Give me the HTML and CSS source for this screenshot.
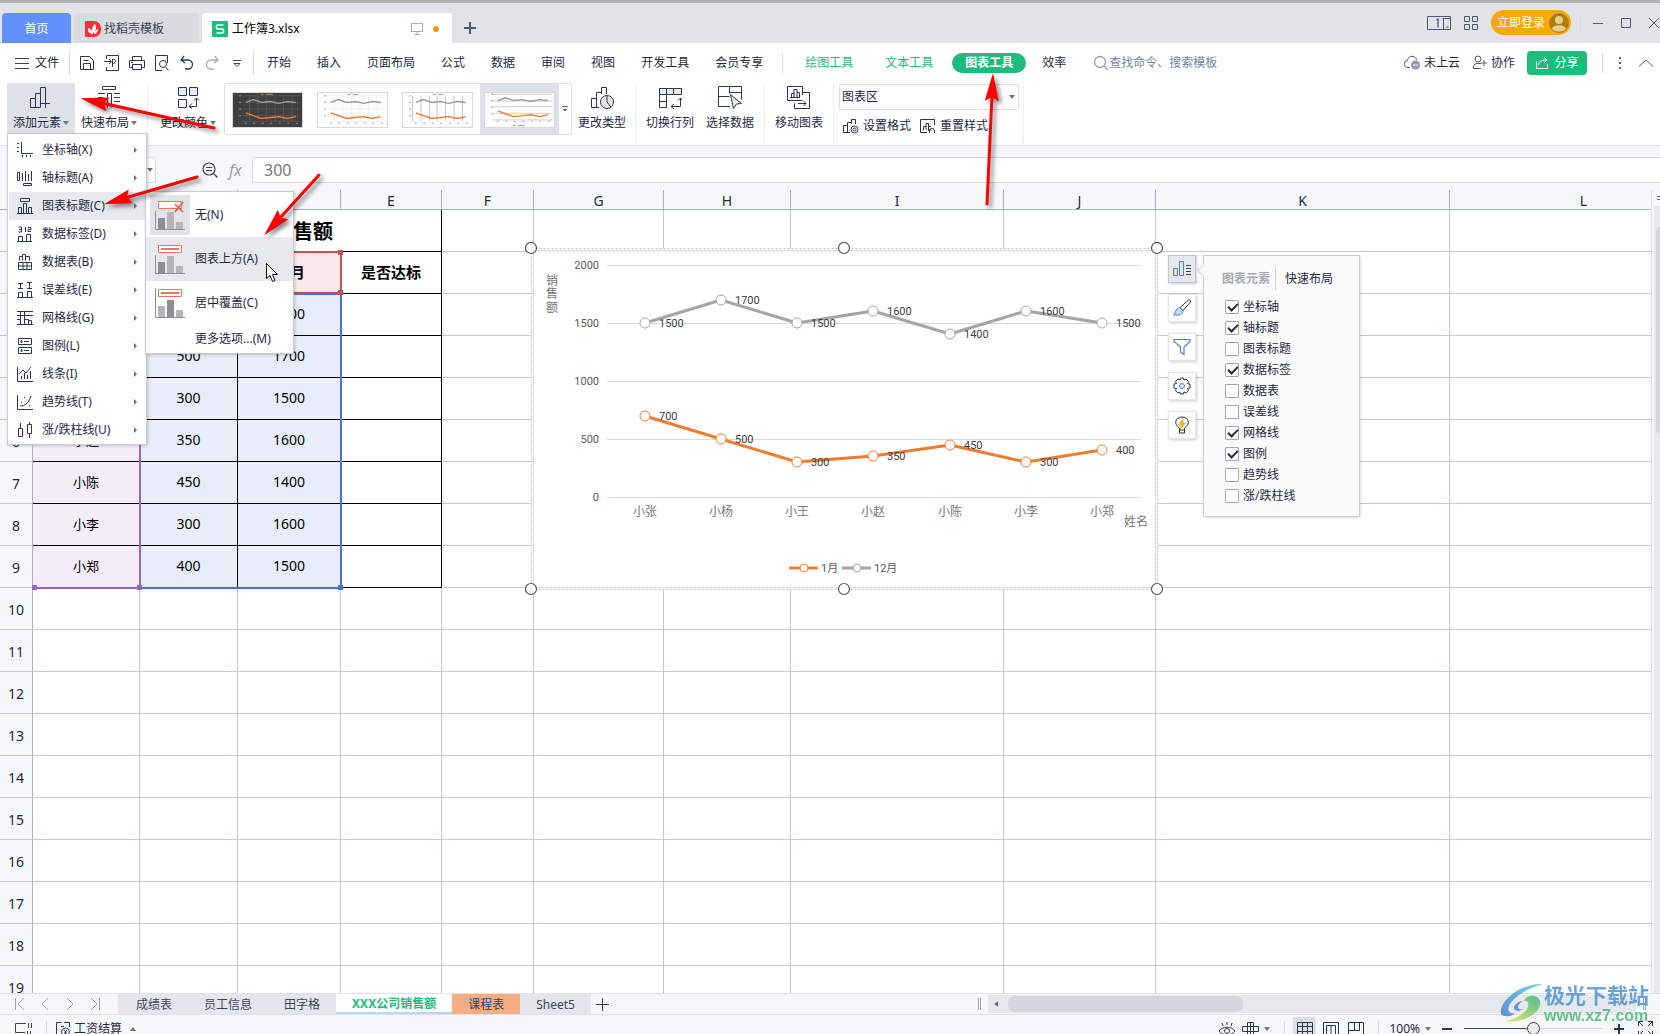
FILE: index.html
```html
<!DOCTYPE html>
<html lang="zh-CN">
<head>
<meta charset="utf-8">
<title>工作簿3.xlsx</title>
<link rel="stylesheet" href="styles.css">
</head>
<body>
<svg class="defs" aria-hidden="true">
  <defs>
    <symbol id="caret" viewBox="0 0 6 4"><path d="M0 0h6L3 4z" fill="#6b7488"/></symbol>
    <symbol id="thumb-lines" viewBox="0 0 70 36">
      <g fill="none" stroke-width="1.5">
        <path d="M12 10 20 7 29 10 38 9 47 11 56 9 65 10" stroke="#9a9a9a"/>
        <path d="M12 21 20 24 29 27 38 26 47 25 56 27 65 25" stroke="#ed7d31"/>
      </g>
      <path d="M11 32h2M20 32h2M29 32h2M38 32h2M47 32h2M56 32h2M65 32h2M5 3h2M5 10h2M5 17h2M5 24h2" stroke="#999"/>
    </symbol>
    <symbol id="thumb-grid" viewBox="0 0 70 36"><path d="M8 3h60M8 10h60M8 17h60M8 24h60M8 30h60M16 3v27M25 3v27M34 3v27M43 3v27M52 3v27M61 3v27"/></symbol>
  </defs>
</svg>
<div class="app">
  <header class="titlebar">
    <nav class="doc-tabs">
      <button class="doc-tab home">首页</button>
      <button class="doc-tab template">
        <svg width="16" height="16" viewBox="0 0 16 16"><path d="M1 0h8a7 7 0 0 1 7 7v2a7 7 0 0 1-7 7H1a1 1 0 0 1-1-1V1a1 1 0 0 1 1-1z" fill="#fb2d3a"/><path d="M8 13C4 13 2.500 10 3 7c3 1 5 3 5 6zM8 12c-2-4 0-8 2-9 2 3 1 7-2 9zM9 13c0-3 2-4 4-5 0 3-2 5-4 5z" fill="#fff"/></svg>
        找稻壳模板</button>
      <button class="doc-tab current">
        <svg width="16" height="16" viewBox="0 0 16 16"><rect width="16" height="16" rx="1" fill="#1fbb7d"/><path d="M11.500 4H6a1.500 1.500 0 0 0-1.500 1.500v1A1.500 1.500 0 0 0 6 8h4a1.500 1.500 0 0 1 1.500 1.500v1A1.500 1.500 0 0 1 10 12H4.500" fill="none" stroke="#fff" stroke-width="1.600"/></svg>
        <span class="grow">工作簿3.xlsx</span>
        <svg width="12" height="12" viewBox="0 0 12 12" fill="none" stroke="#a3adc6"><path d="M.5.500h11v8H.5zM6 8.500v3M3 11.500h6"/></svg>
        <i class="dirty"></i>
      </button>
      <button class="plain add-tab" aria-label="新建"><svg width="12" height="12" viewBox="0 0 12 12" stroke="#4c5878" stroke-width="2"><path d="M6 0v12M0 6h12"/></svg></button>
    </nav>
    <div class="window-tools">
      <svg width="24" height="14" viewBox="0 0 24 14" fill="none" stroke="#4c5878"><path d="M.5.500h23v13H.5zM15.500 2.500h8M16.500 2.500v11M19 11h2.500"/><path d="M9.500 4l1.500-1v8.500" stroke-width="1.300"/></svg>
      <svg width="14" height="14" viewBox="0 0 14 14" fill="none" stroke="#4c5878"><path d="M.5.500h5v5h-5zM8.500.500h5v5h-5zM.5 8.500h5v5h-5zM8.500 8.500h5v5h-5z"/></svg>
      <button class="login">立即登录<svg width="20" height="20" viewBox="0 0 20 20"><circle cx="10" cy="10" r="10" fill="#b07c05"/><circle cx="10" cy="7" r="4" fill="#e6cd96"/><path d="M3 16c1-5 13-5 14 0a10 10 0 0 1-14 0z" fill="#e6cd96"/></svg></button>
      <span class="rule"></span>
      <button class="plain" aria-label="最小化"><svg width="10" height="10" stroke="#4c5878"><path d="M0 5.500h10"/></svg></button>
      <button class="plain" aria-label="最大化"><svg width="10" height="10" fill="none" stroke="#4c5878"><path d="M.5.500h9v9h-9z"/></svg></button>
      <button class="plain" aria-label="关闭"><svg width="11" height="10" stroke="#4c5878"><path d="M0 0l10 10M10 0 0 10"/></svg></button>
    </div>
  </header>

  <div class="menubar">
    <button class="plain file"><svg width="14" height="12" stroke="#3a4256"><path d="M0 1.500h14M0 6.500h14M0 11.500h14"/></svg>文件</button>
    <span class="rule tall"></span>
    <div class="quick">
      <button class="plain" aria-label="保存"><svg width="16" height="16" fill="none" stroke="#2d3650"><path d="M1.500 1.500h9l4 4v9h-13zM4.500 14.500v-6h7v6M4.500 5.500h5"/></svg></button>
      <button class="plain" aria-label="输出为PDF"><svg width="16" height="16" fill="none" stroke="#2d3650"><path d="M2.500 4V.500h12v15h-12V12M0 6.500h7M5 4l2.500 2.500L5 9M8.500 4v8M8.500 4.500c4-1 4 4 0 4"/></svg></button>
      <button class="plain" aria-label="打印"><svg width="16" height="16" fill="none" stroke="#2d3650"><path d="M3.500 5V1.500h9V5M3.500 12.500h-3v-7h15v7h-3M3.500 9.500h9v5h-9zM2 7.500h2"/></svg></button>
      <button class="plain" aria-label="打印预览"><svg width="16" height="16" fill="none" stroke="#2d3650"><path d="M13.500 8V.500h-12v15H8"/><circle cx="9" cy="9" r="3.500"/><path d="M11.500 12l3 3.500"/></svg></button>
      <button class="plain" aria-label="撤销"><svg width="16" height="16" fill="none" stroke="#2d3650" stroke-width="1.300"><path d="M5 1 2 5l4 3M2 5h7a4.500 4.500 0 0 1 0 9H6"/></svg></button>
      <button class="plain" aria-label="恢复"><svg width="16" height="16" fill="none" stroke="#a9aeb9" stroke-width="1.300"><path d="M11 1l3 4-4 3M14 5H7a4.500 4.500 0 0 0 0 9h3"/></svg></button>
      <button class="plain" aria-label="更多"><svg width="16" height="16" fill="none" stroke="#3a4256"><path d="M4 5.500h8M5 8.500l3 3 3-3z"/></svg></button>
    </div>
    <span class="rule tall"></span>
    <nav class="tabs">
      <button class="plain">开始</button><button class="plain">插入</button><button class="plain">页面布局</button><button class="plain">公式</button><button class="plain">数据</button><button class="plain">审阅</button><button class="plain">视图</button><button class="plain">开发工具</button><button class="plain">会员专享</button>
    </nav>
    <span class="rule"></span>
    <nav class="context-tabs">
      <button class="plain">绘图工具</button><button class="plain">文本工具</button>
    </nav>
    <button class="pill">图表工具</button>
    <button class="plain">效率</button>
    <label class="search"><svg width="16" height="16" fill="none" stroke="#8f9bb5" stroke-width="1.300"><circle cx="7" cy="7" r="5.500"/><path d="M11 11l4 4"/></svg><input type="text" placeholder="查找命令、搜索模板" aria-label="查找命令"></label>
    <div class="menubar-right">
      <button class="plain cloud"><svg width="17" height="15" fill="none" stroke="#4c5878"><path d="M6 12.500H4a3.500 3.500 0 0 1-.5-7C4 0 12 0 12.500 5"/><circle cx="11.500" cy="10" r="4.500" fill="#8f99ae" stroke="none"/><path d="M9 10h5" stroke="#fff"/></svg>未上云</button>
      <button class="plain coop"><svg width="15" height="15" fill="none" stroke="#4c5878"><circle cx="6" cy="4" r="3"/><path d="M9 13.500H1.500v-2A3.500 3.500 0 0 1 5 8.500h4M12 5v6M9 8h6"/></svg>协作</button>
      <button class="share"><svg width="14" height="14" fill="none" stroke="#fff"><path d="M1.500 5.500v7h11V8M3.500 9c0-3 3-5 8-5M9 1.500 12 4 9 6.500"/></svg>分享</button>
      <span class="rule"></span>
      <button class="plain" aria-label="更多"><svg width="4" height="14" fill="#5b647a"><path d="M1 1h2v2H1zM1 6h2v2H1zM1 11h2v2H1z"/></svg></button>
      <button class="plain" aria-label="折叠"><svg width="14" height="8" fill="none" stroke="#4c5878"><path d="M0 7.500l7-6.500 7 6.500"/></svg></button>
    </div>
  </div>

  <div class="ribbon">
    <button class="tool active"><svg width="24" height="24" fill="none" stroke="#2d3650"><path d="M1.500 22.500v-9h5v9zM6.500 13V8.500h5v14H1M11.500 8.500v-6h5V15M16.500 14v9M12 18.500h9"/></svg><span>添加元素<svg class="caret"><use href="#caret"/></svg></span></button>
    <button class="tool"><svg width="24" height="24" fill="none" stroke="#2d3650"><path d="M5.500 1.500h13v3h-13zM1 8.500h7M1 12.500h5M1 16.500h5M6.500 22.500v-9h4v9M10.500 13V8.500h4v14M17 8.500h6M17 12.500h6M17 16.500h6"/></svg><span>快速布局<svg class="caret"><use href="#caret"/></svg></span></button>
    <span class="divider"></span>
    <button class="tool colors"><svg width="24" height="24" fill="none" stroke="#2d3650"><path d="M2.500 2.500h8v8h-8zM13.500 2.500h8v8h-8z" fill="#e8eaef"/><path d="M2.500 14.500h8v8h-8zM20.500 13v8.500h-7M16 18.500l-3 3 3 2M18 15.500l2.500-2.500 2.500 2.500"/></svg><span>更改颜色<svg class="caret"><use href="#caret"/></svg></span></button>
    <div class="gallery">
      <button class="style dark" aria-label="样式1"><svg viewBox="0 0 70 36"><use href="#thumb-grid" stroke="#555"/><use href="#thumb-lines"/><path d="M28 1.500h3" stroke="#ed7d31"/><path d="M33 1.500h8" stroke="#999"/></svg></button>
      <button class="style" aria-label="样式2"><svg viewBox="0 0 70 36"><use href="#thumb-grid" stroke="#eee"/><use href="#thumb-lines"/><path d="M30 1.500h3" stroke="#ed7d31"/><path d="M35 1.500h6" stroke="#999"/></svg></button>
      <button class="style" aria-label="样式3"><svg viewBox="0 0 70 36"><path d="M8.500 3v27M17.500 3v27M26.500 3v27M34.500 3v27M43.500 3v27M52.500 3v27M61.500 3v27" stroke="#c4c4c4"/><use href="#thumb-lines"/><path d="M30 1.500h3" stroke="#ed7d31"/><path d="M35 1.500h6" stroke="#999"/></svg></button>
      <button class="style picked" aria-label="样式4"><svg viewBox="0 0 70 36"><path d="M6 1.500h64M6 8.500h64M6 14.500h64M6 21.500h64M6 28.500h64" stroke="#ccc"/><use href="#thumb-lines" y="-2"/><path d="M28 34.500h3" stroke="#ed7d31"/><path d="M33 34.500h8" stroke="#999"/></svg></button>
      <button class="more" aria-label="更多样式"><svg width="6" height="6" stroke="#5b6c8f"><path d="M0 .500h6M1 3.500h4M2 4.500h2"/></svg></button>
    </div>
    <button class="tool"><svg width="24" height="24" fill="none" stroke="#2d3650"><path d="M9 22.500H1.500v-9h5M6.500 22.500V7.500h5M11.500 9V2.500h5V9"/><circle cx="17" cy="17" r="6.500" fill="#e8eaef"/><path d="M17 10.500V17l4 5"/></svg><span>更改类型</span></button>
    <span class="divider"></span>
    <button class="tool"><svg width="24" height="24" fill="none" stroke="#2d3650"><path d="M1.500 3.500h22v6h-22z" fill="#e8eaef"/><path d="M8.500 3.500v19h-7v-19M15.500 3.500v6M1.500 16.500h7M22.500 13v8.500h-9M16 19l-3 2.500 3 2.500M20 15.500l2.500-2.500 2 2.500"/></svg><span>切换行列</span></button>
    <button class="tool"><svg width="24" height="24" fill="none" stroke="#2d3650"><path d="M12 21.500H.500v-20h23v13M.500 11.500h11M11.500 1.500v7M11.500 7.500h12"/><path d="M12.500 9.500l11 9-5 .500-3 4.500z" fill="#e8eaef"/></svg><span>选择数据</span></button>
    <span class="divider"></span>
    <button class="tool"><svg width="24" height="24" fill="none" stroke="#2d3650"><path d="M15.500 10V1.500H.500v14h15M3 12.500h10M4.500 12V8.500h2.500V12M7 9V4.500h3V12M10 7.500h2.500V12M15.500 7.500h7v16h-15v-5M11 18.500h8M16.500 16l2.500 2.500-2.500 2.500"/></svg><span>移动图表</span></button>
    <span class="divider"></span>
    <div class="format">
      <div class="select"><select aria-label="图表元素"><option>图表区</option></select><svg class="caret"><use href="#caret"/></svg></div>
      <div class="format-row">
        <button class="plain"><svg width="16" height="16" fill="none" stroke="#2d3650"><path d="M7 14.500H.500v-7h4M4.500 14.500v-10h4M8.500 6V1.500h4V6"/><circle cx="11.500" cy="11.500" r="3.500"/><circle cx="11.500" cy="11.500" r="1.500"/></svg>设置格式</button>
        <button class="plain"><svg width="16" height="16" fill="none" stroke="#2d3650"><path d="M14.500 7V1.500H.500v13H7M3.500 12V8.500H6V12M6 9V5.500h2.500V12M9 8.500h2M9.500 15v-2a2.500 2.500 0 0 1 5 0v2M8 13l1.500-2 2 2"/></svg>重置样式</button>
      </div>
    </div>
    <span class="divider"></span>
  </div>

  <div class="formula">
    <div class="namebox"><svg class="caret"><use href="#caret"/></svg></div>
    <svg class="lens" width="16" height="16" fill="none" stroke="#3a4256" stroke-width="1.200"><circle cx="7" cy="7" r="6"/><path d="M11.500 11.500l4 4M4 5.500h6M4 8.500h6"/></svg>
    <i class="fx">fx</i>
    <input class="cell-value" type="text" value="300" aria-label="编辑栏">
  </div>

  <main class="sheet">
    <div class="sheet-view">
      <table class="grid">
        <colgroup><col class="c-head"><col class="c-b"><col class="c-c"><col class="c-d"><col class="c-e"><col class="c-f"><col class="c-g"><col class="c-h"><col class="c-i"><col class="c-j"><col class="c-k"><col class="c-l"></colgroup>
        <thead><tr><th></th><th></th><th></th><th></th><th>E</th><th>F</th><th>G</th><th>H</th><th>I</th><th>J</th><th>K</th><th>L</th></tr></thead>
        <tbody>
        <tr><th></th><td colspan="4" class="ink title">XXX公司各月份销售额</td><td><td><td><td><td><td><td></tr>
        <tr><th></th><td class="ink head"></td><td class="ink head rose"></td><td class="ink head rose">12月</td><td class="ink head">是否达标</td><td><td><td><td><td><td><td></tr>
        <tr><th></th><td class="ink name"></td><td class="ink num"></td><td class="ink num">1500</td><td class="ink"></td><td><td><td><td><td><td><td></tr>
        <tr><th></th><td class="ink name"></td><td class="ink num">500</td><td class="ink num">1700</td><td class="ink"></td><td><td><td><td><td><td><td></tr>
        <tr><th></th><td class="ink name"></td><td class="ink num">300</td><td class="ink num">1500</td><td class="ink"></td><td><td><td><td><td><td><td></tr>
        <tr><th>6</th><td class="ink name">小赵</td><td class="ink num">350</td><td class="ink num">1600</td><td class="ink"></td><td><td><td><td><td><td><td></tr>
        <tr><th>7</th><td class="ink name">小陈</td><td class="ink num">450</td><td class="ink num">1400</td><td class="ink"></td><td><td><td><td><td><td><td></tr>
        <tr><th>8</th><td class="ink name">小李</td><td class="ink num">300</td><td class="ink num">1600</td><td class="ink"></td><td><td><td><td><td><td><td></tr>
        <tr><th>9</th><td class="ink name">小郑</td><td class="ink num">400</td><td class="ink num">1500</td><td class="ink"></td><td><td><td><td><td><td><td></tr>
        <tr><th>10</th><td><td><td><td><td><td><td><td><td><td><td></tr>
        <tr><th>11</th><td><td><td><td><td><td><td><td><td><td><td></tr>
        <tr><th>12</th><td><td><td><td><td><td><td><td><td><td><td></tr>
        <tr><th>13</th><td><td><td><td><td><td><td><td><td><td><td></tr>
        <tr><th>14</th><td><td><td><td><td><td><td><td><td><td><td></tr>
        <tr><th>15</th><td><td><td><td><td><td><td><td><td><td><td></tr>
        <tr><th>16</th><td><td><td><td><td><td><td><td><td><td><td></tr>
        <tr><th>17</th><td><td><td><td><td><td><td><td><td><td><td></tr>
        <tr><th>18</th><td><td><td><td><td><td><td><td><td><td><td></tr>
        <tr><th>19</th><td><td><td><td><td><td><td><td><td><td><td></tr>
        </tbody>
      </table>
      <div class="range values"><i class="br"></i></div>
      <div class="range names"><i class="br"></i><i class="bl"></i></div>
      <div class="range series"><i class="tr"></i><i class="br"></i></div>

      <svg class="chart" width="640" height="354" viewBox="525 242 640 354">
        <rect x="531.500" y="248.500" width="626" height="341" fill="#fff" stroke="#bbb" stroke-dasharray="2 2"/>
        <rect x="533.500" y="250.500" width="622" height="337" fill="#fff" stroke="#d9d9d9"/>
        <path d="M607 265.500h534M607 323.500h534M607 381.500h534M607 439.500h534M607 497.500h534" stroke="#d9d9d9"/>
        <g class="axis" text-anchor="end"><text x="599" y="269">2000</text><text x="599" y="327">1500</text><text x="599" y="385">1000</text><text x="599" y="443">500</text><text x="599" y="501">0</text></g>
        <g class="cats" text-anchor="middle"><text x="645" y="516">小张</text><text x="721" y="516">小杨</text><text x="797" y="516">小王</text><text x="873" y="516">小赵</text><text x="950" y="516">小陈</text><text x="1026" y="516">小李</text><text x="1102" y="516">小郑</text><text x="1136" y="526">姓名</text><text x="552" y="285">销</text><text x="552" y="298">售</text><text x="552" y="312">额</text></g>
        <g fill="none" stroke-width="3" stroke-linejoin="round">
          <path d="M645 323 721 300 797 323 873 311 950 334 1026 311 1102 323" stroke="#a5a5a5"/>
          <path d="M645 416 721 439 797 462 873 456 950 445 1026 462 1102 450" stroke="#ed7d31"/>
          <path d="M789 568h29" stroke="#ed7d31"/><path d="M842 568h29" stroke="#a5a5a5"/>
        </g>
        <g fill="#fff" stroke="#a5a5a5"><circle cx="645" cy="323" r="5"/><circle cx="721" cy="300" r="5"/><circle cx="797" cy="323" r="5"/><circle cx="873" cy="311" r="5"/><circle cx="950" cy="334" r="5"/><circle cx="1026" cy="311" r="5"/><circle cx="1102" cy="323" r="5"/><circle cx="857" cy="568" r="4"/></g>
        <g fill="#fff" stroke="#ed7d31"><circle cx="645" cy="416" r="5"/><circle cx="721" cy="439" r="5"/><circle cx="797" cy="462" r="5"/><circle cx="873" cy="456" r="5"/><circle cx="950" cy="445" r="5"/><circle cx="1026" cy="462" r="5"/><circle cx="1102" cy="450" r="5"/><circle cx="804" cy="568" r="4"/></g>
        <g class="labels"><text x="659" y="327">1500</text><text x="735" y="304">1700</text><text x="811" y="327">1500</text><text x="887" y="315">1600</text><text x="964" y="338">1400</text><text x="1040" y="315">1600</text><text x="1116" y="327">1500</text><text x="659" y="420">700</text><text x="735" y="443">500</text><text x="811" y="466">300</text><text x="887" y="460">350</text><text x="964" y="449">450</text><text x="1040" y="466">300</text><text x="1116" y="454">400</text></g>
        <g class="axis"><text x="821" y="572">1月</text><text x="874" y="572">12月</text></g>
        <g fill="#fff" stroke="#555" stroke-width="1.200"><circle cx="531" cy="248" r="5.500"/><circle cx="844" cy="248" r="5.500"/><circle cx="1157" cy="248" r="5.500"/><circle cx="531" cy="589" r="5.500"/><circle cx="844" cy="589" r="5.500"/><circle cx="1157" cy="589" r="5.500"/></g>
      </svg>

      <div class="chart-tools">
        <button class="on" aria-label="图表元素"><svg width="20" height="20" fill="none"><path d="M1.500 9.500h4v7h-4z" stroke="#777" fill="#ddd"/><path d="M7.500 2.500h4v14h-4z" stroke="#4a7fdc" fill="#dbe7fb"/><path d="M14 6.500h5M14 9.500h5M14 12.500h5M14 15.500h5" stroke="#444"/></svg></button>
        <button aria-label="图表样式"><svg width="20" height="20" fill="none"><path d="M8 9.500 16.500 2c1.500-.500 2.500.500 2 2L11 12.500z" stroke="#333"/><path d="M7.500 9.500l3.500 3c0 4-4 5-9.500 4.500C4 15 3 11 7.500 9.500z" stroke="#4a7fdc" fill="#c9dbf8"/></svg></button>
        <button aria-label="图表筛选器"><svg width="20" height="20" fill="none" stroke="#4a7fdc" stroke-width="1.200"><path d="M2 2.500h16v2L12 10v7.500L8.500 15v-5L2 4.500z"/></svg></button>
        <button aria-label="设置"><svg width="20" height="20" fill="none"><path d="M8.500 2h3l.5 2 2-1 2.500 2.500-1 2 2.500.500v4l-2.500.500 1 2-2.500 2.500-2-1-.5 2h-3l-.5-2-2 1-2.500-2.500 1-2-2.500-.500V8l2.500-.500-1-2L6 3l2 1z" stroke="#333"/><circle cx="10" cy="10" r="2.500" stroke="#4a7fdc" fill="#dbe7fb"/></svg></button>
        <button aria-label="智能推荐"><svg width="20" height="20" fill="none"><path d="M7.500 15v-2C1 9 3.500 2 10 2s9 7 2.500 11v2zM7.500 15v3h5v-3" stroke="#333"/><path d="M11 4 6.500 9.500H9L8.500 14l5-6H11z" fill="#fdb813" stroke="#d98a00" stroke-width=".5"/></svg></button>
      </div>

      <section class="elements">
        <div class="elements-tabs"><button class="plain chosen">图表元素</button><button class="plain">快速布局</button></div>
        <label><input type="checkbox" checked>坐标轴</label>
        <label><input type="checkbox" checked>轴标题</label>
        <label><input type="checkbox">图表标题</label>
        <label><input type="checkbox" checked>数据标签</label>
        <label><input type="checkbox">数据表</label>
        <label><input type="checkbox">误差线</label>
        <label><input type="checkbox" checked>网格线</label>
        <label><input type="checkbox" checked>图例</label>
        <label><input type="checkbox">趋势线</label>
        <label><input type="checkbox">涨/跌柱线</label>
      </section>
    </div>
    <div class="vscroll"><svg width="8" height="4" stroke="#5b6c8f"><path d="M3 .500h5M3 3.500h5"/></svg><span class="vtrack"><span class="vthumb"></span></span></div>
  </main>

  <div class="sheetbar">
    <div class="nav">
      <button class="plain" aria-label="第一个"><svg width="10" height="14" fill="none" stroke="#a0a5b0"><path d="M.5 1v12M9 1 3 7l6 6"/></svg></button>
      <button class="plain" aria-label="上一个"><svg width="10" height="14" fill="none" stroke="#a0a5b0"><path d="M8 1 2 7l6 6"/></svg></button>
      <button class="plain" aria-label="下一个"><svg width="10" height="14" fill="none" stroke="#a0a5b0"><path d="M2 1l6 6-6 6"/></svg></button>
      <button class="plain" aria-label="最后一个"><svg width="10" height="14" fill="none" stroke="#a0a5b0"><path d="M9.500 1v12M1 1l6 6-6 6"/></svg></button>
    </div>
    <button class="sheet-tab">成绩表</button><button class="sheet-tab">员工信息</button><button class="sheet-tab">田字格</button><button class="sheet-tab here">XXX公司销售额</button><button class="sheet-tab orange">课程表</button><button class="sheet-tab">Sheet5</button>
    <button class="plain add-sheet" aria-label="新建工作表"><svg width="13" height="13" stroke="#3a4256"><path d="M6.500 0v13M0 6.500h13"/></svg></button>
    <div class="hscroll">
      <span class="grip"></span>
      <span class="htrack"><svg width="4" height="6"><path d="M4 0v6L0 3z" fill="#6b7488"/></svg><span class="hthumb"></span></span>
      <span class="grip"></span>
    </div>
  </div>

  <footer class="status">
    <svg width="17" height="14" fill="none" stroke="#3a4256"><path d="M10 10.500H.500v-9H11M5 13.500h5M13.500 1v5M16.500 1v5M12.500 9v5M15.500 9v5"/></svg>
    <span class="rule small"></span>
    <button class="plain payroll"><svg width="15" height="16" fill="none" stroke="#2d3650"><path d="M4 15.500H.500v-14h5M8 1.500h5.500V6M5 5.500h3"/><circle cx="9.500" cy="11" r="4"/><path d="M8 9l1.500 2L11 9M9.500 11v3M8 12h3"/></svg>工资结算<svg class="caret up"><use href="#caret"/></svg></button>
    <div class="status-right">
      <svg width="18" height="16" fill="none" stroke="#2d3650"><path d="M1 10c3-5 13-5 16 0-3 5-13 5-16 0zM9 1v3M4 2l1 3M14 2l-1 3"/><circle cx="9" cy="10" r="2.500"/></svg>
      <button class="plain focus" aria-label="阅读模式"><svg width="17" height="16" fill="none" stroke="#2d3650"><path d="M.5 5.500h16v5H.5zM8.500 1v14M5.500 1.500h6v13h-6z"/></svg><svg class="caret"><use href="#caret"/></svg></button>
      <span class="rule small"></span>
      <div class="views">
        <button class="plain view-on" aria-label="普通视图"><svg width="16" height="14" fill="none" stroke="#2d3650"><path d="M.5.500h15v13H.5zM.5 4.500h15M.5 9.500h15M5.500.500v13M10.500.500v13"/></svg></button>
        <button class="plain" aria-label="页面布局"><svg width="16" height="14" fill="none" stroke="#2d3650"><path d="M.5 14V.500h15V14M3.500 14V3.500h9V14M8 4v10"/></svg></button>
        <button class="plain" aria-label="分页预览"><svg width="16" height="14" fill="none" stroke="#2d3650"><path d="M.5.500h15v13H.5zM6.500.500v8h5v-8M.5 8.500h11"/></svg></button>
      </div>
      <span class="rule small"></span>
      <button class="plain focus percent">100%<svg class="caret"><use href="#caret"/></svg></button>
      <button class="plain" aria-label="缩小"><svg width="10" height="10" stroke="#2d3650" stroke-width="2"><path d="M0 5h10"/></svg></button>
      <input type="range" class="zoom" aria-label="显示比例" min="0" max="100" value="50">
      <button class="plain" aria-label="放大"><svg width="10" height="10" stroke="#2d3650" stroke-width="2"><path d="M0 5h10M5 0v10"/></svg></button>
      <svg width="15" height="15" fill="none" stroke="#2d3650"><path d="M5 .500H.500V5M.500.500 5 5M10 .500h4.500V5M14.500.500 10 5M5 14.500H.500V10M.500 14.500 5 10M10 14.500h4.500V10M14.500 14.500 10 10"/></svg>
    </div>
  </footer>
</div>

<div class="menu">
  <button><svg width="16" height="16"><path d="M4.500 0v11.500H16M0 1.500h2M0 5.500h2M0 9.500h2M5.500 13v2M9.500 13v2M13.500 13v2"/></svg>坐标轴(X)<i></i></button>
  <button><svg width="16" height="16"><path d="M.5 2.500h2v8h-2zM5.500 3v8M8.500 1v10M11.500 4v7M14.500 1v10M6.500 13.500h8v2h-8z"/></svg>轴标题(A)<i></i></button>
  <button class="hot"><svg width="16" height="16"><path d="M3.500.500h9v3h-9zM0 15.500h16M1.500 15V9.500h3V15M6.500 15V5.500h3V15M11.500 15V9.500h3V15"/></svg>图表标题(C)<i></i></button>
  <button><svg width="16" height="16"><path d="M1.500 1h3v5h-3M2 3.500h2M8.500 1v5M11 1.500h3v2h-3v2h3M1.500 15.500v-5h4v5zM9.500 15.500v-7h4v7zM0 15.500h15"/></svg>数据标签(D)<i></i></button>
  <button><svg width="16" height="16"><path d="M1.500 8.500h13v7h-13zM1.500 12h13M6 8.500v7M10 8.500v7M2.500 6.500v-4h3M5.500 6.500v-6h3v6M8.500 2.500h4v4"/></svg>数据表(B)<i></i></button>
  <button><svg width="16" height="16"><path d="M1.500 15.500v-5h4v5zM10.500 15.500v-6h4v6zM0 15.500h16M1 1.500h5M3.500 1.500v5M1 6.500h5M10 .500h5M12.500.500v6M10 6.500h5"/></svg>误差线(E)<i></i></button>
  <button><svg width="16" height="16"><path d="M0 1.500h4M0 5.500h16M0 9.500h4M0 14.500h16M3.500 1v13M7.500 1v13M3.500 1.500h4M7.500 9.500h4v5M11.500 10.500h3v4M8 1.500h8"/></svg>网格线(G)<i></i></button>
  <button><svg width="16" height="16"><path d="M1.500.500h13v6h-13zM1.500 9.500h13v6h-13zM7 3.500h5M7 12.500h5M4 2.500h1v2H4zM4 11.500h1v2H4z"/></svg>图例(L)<i></i></button>
  <button><svg width="16" height="16"><path d="M.500 1v14.500H16M2 8l4-4 3 3 5-6M4.500 13v-3M7.500 13V7M10.500 13V9M13.500 13V5"/></svg>线条(I)<i></i></button>
  <button><svg width="16" height="16"><path d="M.500 1v14.500H16M3 12c6 0 9-4 11-10M4 8.500h1M7 3.500h1M12 11.500h1"/></svg>趋势线(T)<i></i></button>
  <button><svg width="16" height="16"><path d="M1.500 6.500h4v8h-4zM3.500 1v5M10.500 2.500h4v9h-4zM12.500 0v2M12.500 12v4"/></svg>涨/跌柱线(U)<i></i></button>
</div>

<div class="submenu">
  <button><svg class="boxed" width="40" height="40"><path d="M8 23h7v11H8z" fill="#8e8f94"/><path d="M17 17h7v17h-7zM26 27h7v7h-7z" fill="#b5b6ba"/><path d="M5.500 16v18.500H35" stroke="#8e8f94" fill="none"/><path d="M8.500 6.500h23v7h-23z" fill="#fff" stroke="#e9785c"/><path d="M25 9l8 8M33 7l-8 10" stroke="#ee5535" stroke-width="1.600"/></svg>无(N)</button>
  <button class="hot"><svg width="40" height="40"><path d="M8 23h7v11H8z" fill="#8e8f94"/><path d="M17 17h7v17h-7zM26 27h7v7h-7z" fill="#b5b6ba"/><path d="M5.500 16v18.500H35" stroke="#8e8f94" fill="none"/><path d="M8.500 6.500h23v7h-23z" fill="#fff" stroke="#e9785c"/><path d="M11 10h18" stroke="#e9785c" stroke-width="2"/></svg>图表上方(A)</button>
  <button><svg width="40" height="40"><path d="M17 17h7v17h-7z" fill="#8e8f94"/><path d="M8 23h7v11H8zM26 27h7v7h-7z" fill="#b5b6ba"/><path d="M5.500 5v29.500H35" stroke="#8e8f94" fill="none"/><path d="M8.500 6.500h23v7h-23z" fill="#fff" stroke="#e9785c"/><path d="M11 10h18" stroke="#e9785c" stroke-width="2"/></svg>居中覆盖(C)</button>
  <button class="short">更多选项...(M)</button>
</div>

<svg class="pointers" width="1010" height="290">
  <defs><marker id="head" markerUnits="userSpaceOnUse" markerWidth="32" markerHeight="20" refX="6" refY="8" orient="auto"><path d="M0 1 28 8 0 15 4 8z"/></marker></defs>
  <g class="arrows">
    <path d="M214 128 102 103"/><path d="M197 177 125 198"/><path d="M319 175 279 219"/><path d="M987 204 992 95"/>
  </g>
  <path d="M266.500 263.500v15l3.500-3 2.500 6 2.500-1-2.500-6h5z" fill="#fff" stroke="#111"/>
</svg>

<div class="watermark">
  <svg width="44" height="38" viewBox="0 0 44 38">
    <defs><linearGradient id="wm-b" x1="0" y1="1" x2="1" y2="0"><stop offset="0" stop-color="#4b7fd0"/><stop offset="1" stop-color="#5cc8f5"/></linearGradient><linearGradient id="wm-g" x1="1" y1="0" x2="0" y2="1"><stop offset="0" stop-color="#3bb58a"/><stop offset="1" stop-color="#d9e84a"/></linearGradient></defs>
    <path d="M43 0C25-1 4 12 1 25c-1 4 0 7 4 7 4 1 9-1 10-3-5 1-8-2-6-7C13 13 26 5 43 0z" fill="url(#wm-b)"/>
    <path d="M34 12c8 2 8 10 2 16C29 35 16 39 5 37c11-2 20-7 23-14 1-5-1-7-5-6 3-4 7-6 11-5z" fill="url(#wm-g)"/>
    <path d="M23 17c-5 0-9 4-9 7s5 4 9 1c-3 1-5 0-5-2s2-4 5-6z" fill="#4b86d2"/>
  </svg>
  <p><span class="wm-name">极光下载站</span><span class="wm-url">www.xz7.com</span></p>
</div>
</body>
</html>
```
FILE: styles.css
```css
* { box-sizing: border-box; }
body { margin: 0; height: 100vh; overflow: hidden; position: relative; background: #f6f7f9; color: #1f2942; font: 12px/16px "Noto Sans", "Noto Sans CJK SC", sans-serif; }
button, input, select { font: inherit; color: inherit; }
button { border: 0; margin: 0; padding: 0; background: none; white-space: nowrap; }
svg { display: block; flex: none; }
.defs { position: absolute; width: 0; height: 0; }
.caret { width: 6px; height: 4px; }
.plain { display: flex; align-items: center; }
.rule { width: 1px; height: 20px; background: #d9dbe1; flex: none; }
.rule.tall { height: 24px; }
.rule.small { height: 16px; }
.grow { flex: 1; text-align: left; }

.app { display: flex; flex-direction: column; height: calc(100vh + 8px); }

/* title bar */
.titlebar { display: flex; justify-content: space-between; height: 43px; flex: none; border-top: 3px solid #b2b2b0; background: #e2e3e7; overflow: hidden; }
.doc-tabs { display: flex; align-items: flex-end; padding-left: 2px; gap: 3px; }
.doc-tab { display: flex; align-items: center; height: 30px; padding-top: 2px; border-radius: 4px 4px 0 0; }
.home { width: 69px; justify-content: center; background: #6290fd; color: #fff; }
.template { width: 125px; padding-left: 11px; gap: 3px; background: #dadbdf; color: #3a4256; }
.current { width: 250px; padding-left: 10px; padding-right: 13px; gap: 4px; background: #fff; color: #000; }
.current svg + .dirty { margin-left: 6px; }
.dirty { width: 6px; height: 6px; border-radius: 3px; background: #e79c0b; }
.add-tab { height: 30px; margin-left: 9px; }
.window-tools { display: flex; align-items: center; gap: 18px; margin-bottom: 1px; }
.window-tools > svg + svg { margin-left: -5px; }
.login { display: flex; align-items: center; gap: 4px; height: 25px; margin: 0 -9px 0 -5px; padding: 0 2px 0 6px; border-radius: 13px; background: #f7a80b; color: #fff; }
.window-tools .rule + button { margin-left: -6px; }

/* menu bar */
.menubar { display: flex; align-items: center; height: 39px; flex: none; padding: 0 7px 0 15px; background: #fff; }
.file { gap: 6px; margin-right: 10px; }
.quick { display: flex; gap: 9px; padding: 0 8px 0 9px; }
.tabs { display: flex; gap: 26px; padding: 0 19px 0 13px; }
.context-tabs { display: flex; gap: 32px; padding: 0 19px 0 22px; color: #1fbb7d; }
.pill { width: 74px; height: 20px; margin-right: 16px; border-radius: 10px; background: #1fbb7d; color: #fff; font-weight: bold; }
.search { display: flex; align-items: center; margin-left: 27px; }
.search input { width: 130px; padding: 0; border: 0; outline: 0; background: none; }
.search input::placeholder { color: #76839f; opacity: 1; }
.menubar-right { display: flex; align-items: center; margin-left: auto; }
.cloud { gap: 3px; margin-right: 12px; }
.coop { gap: 4px; margin-right: 12px; }
.share { display: flex; align-items: center; justify-content: center; gap: 5px; width: 60px; height: 24px; margin-right: 15px; border-radius: 4px; background: #1fbb7d; color: #fff; }
.menubar-right .rule + button { margin: 0 17px 0 15px; }

/* ribbon */
.ribbon { display: flex; height: 64px; flex: none; padding: 1px 0 0 7px; border-bottom: 1px solid #dfe2e7; background: #fff; }
.tool { display: flex; flex-direction: column; align-items: center; gap: 6px; width: 68px; height: 51px; padding-top: 2px; flex: none; }
.tool span { display: flex; align-items: center; gap: 2px; }
.tool.active { background: #dee2e8; }
.divider { width: 1px; height: 60px; margin: 0 4px; background: #eceef2; flex: none; }
.colors { margin: 0 2px; }
.gallery { display: flex; height: 52px; border: 1px solid #dcdfe4; border-radius: 2px; flex: none; }
.style { width: 85px; padding: 8px 7px; }
.style:nth-child(4) { width: 79px; padding: 8px 4px; }
.style svg { height: 36px; border: 1px solid #d4d7dc; background: #fff; width: 71px; }
.dark svg { background: #404040; }
.picked { background: #dee2e6; }
.more { display: flex; align-items: center; justify-content: center; width: 12px; }
.gallery ~ .tool { width: 60px; }
.gallery + .tool { margin-right: -1px; }
.format { display: flex; flex-direction: column; gap: 8px; width: 180px; margin: 1px 0 0 1px; flex: none; }
.select { display: flex; align-items: center; height: 26px; border: 1px solid #dcdfe4; border-radius: 2px; padding-right: 3px; }
.select select { flex: 1; appearance: none; border: 0; padding: 0 2px; background: none; outline: 0; }
.format-row { display: flex; gap: 9px; padding-left: 4px; }
.format-row .plain { gap: 4px; }

/* formula bar */
.formula { display: flex; align-items: center; height: 44px; flex: none; padding: 4px 0 0 8px; }
.namebox { display: flex; align-items: center; justify-content: flex-end; width: 148px; height: 26px; padding-right: 2px; border: 1px solid #d5d8de; border-radius: 2px; background: #fff; }
.lens { margin: 0 11px 0 46px; }
.fx { width: 15px; margin: 0 8px 0 0; color: #9a9ea8; font-size: 16px; }
.cell-value { flex: 1; height: 26px; padding: 0 11px; border: 1px solid #d5d8de; border-right: 0; border-radius: 2px 0 0 2px; background: #fff; color: #777; font-size: 16px; outline: 0; }

/* sheet */
.sheet { display: flex; flex: 1; min-height: 0; overflow: hidden; }
.sheet-view { position: relative; flex: 1; overflow: hidden; border-right: 1px solid #dfe1e7; background: #fff; }
.grid { width: 1718px; table-layout: fixed; border-collapse: separate; border-spacing: 0; }
.c-head { width: 33px; } .c-b { width: 107px; } .c-c { width: 98px; } .c-d { width: 103px; } .c-e { width: 101px; } .c-f { width: 92px; }
.c-g { width: 130px; } .c-h { width: 127px; } .c-i { width: 213px; } .c-j { width: 152px; } .c-k { width: 294px; } .c-l { width: 268px; }
.grid th, .grid td { padding: 0 0 2px; text-align: center; border-right: 1px solid #c3cad9; border-bottom: 1px solid #c3cad9; }
.grid th { padding: 2px 0 0; background: #f6f7f9; font-size: 14px; font-weight: normal; border-right-color: #a9b2c6; }
.grid thead th { height: 20px; line-height: 17px; border-color: #a9b2c6; }
.grid tbody tr { height: 42px; }
.grid td.ink { border-color: #000; color: #000; }
.grid .title { padding: 2px 8px 0 0; font-size: 20px; font-weight: bold; line-height: 28px; }
.grid .head { font-size: 15px; font-weight: bold; }
.grid .rose { background: #f8eaea; }
.grid .name { font-size: 13px; background: #f3edf7; }
.grid .num { font-size: 14px; background: #e9edf9; }

.range { position: absolute; border: 2px solid; }
.range i { position: absolute; width: 5px; height: 5px; background: currentColor; }
.range .br { right: -3px; bottom: -3px; }
.range .bl { left: -1px; bottom: -3px; }
.range .tr { right: -3px; top: -3px; }
.values { left: 139px; top: 103px; width: 203px; height: 296px; color: #4a70d0; }
.names { left: 33px; top: 103px; width: 108px; height: 296px; color: #9467bd; border-left: 0; }
.series { left: 139px; top: 61px; width: 203px; height: 43px; color: #c8504f; }

.chart { position: absolute; left: 525px; top: 52px; font: 11px Roboto, "Noto Sans CJK SC", sans-serif; }
.axis { fill: #595959; }
.labels { fill: #404040; }
.cats { font-size: 12px; fill: #767676; }

.chart-tools { position: absolute; left: 1168px; top: 65px; display: flex; flex-direction: column; gap: 11px; }
.chart-tools button { display: grid; place-items: center; width: 28px; height: 28px; border: 1px solid #e4e6ea; background: #fff; box-shadow: 1px 1px 3px #0003; }
.chart-tools .on { background: #e5e8ee; border-color: #c0c4cd; }

.elements { position: absolute; left: 1203px; top: 65px; width: 157px; height: 262px; padding: 11px 0 0 18px; border: 1px solid #cbcfd8; background: #fbfbfb; box-shadow: 1px 1px 3px #0002; }
.elements::before { content: ""; position: absolute; left: -5px; top: 10px; width: 8px; height: 8px; border: 1px solid #cbcfd8; border-width: 0 0 1px 1px; background: #fbfbfb; rotate: 45deg; }
.elements-tabs { display: flex; height: 24px; margin-bottom: 5px; }
.elements-tabs .chosen { margin-right: 9px; padding-right: 5px; border-right: 1px solid #d0d3da; color: #a6a9b3; font-weight: bold; }
.elements label { display: flex; align-items: center; gap: 4px; height: 21px; padding-left: 3px; }
.elements input { appearance: none; width: 14px; height: 14px; margin: 0; border: 1px solid #a5a8b0; border-radius: 1px; background: #fff; }
.elements input:checked::after { content: ""; display: block; width: 8px; height: 4px; margin: 2px 0 0 2px; border: 2px solid #262e40; border-width: 0 0 2px 2px; rotate: -45deg; }

.vscroll { display: flex; flex-direction: column; gap: 6px; width: 8px; padding: 6px 0 0 2px; overflow: hidden; flex: none; }
.vtrack { flex: 1; padding: 20px 0 0 2px; background: #e7e8ee; }
.vthumb { display: block; width: 12px; height: 209px; border-radius: 6px; background: #d3d6df; }

/* sheet tabs */
.sheetbar { display: flex; height: 22px; flex: none; border-top: 1px solid #e0e2e8; border-bottom: 1px solid #e0e2e8; background: #f6f7f9; }
.nav { display: flex; align-items: center; gap: 15px; width: 118px; padding-left: 15px; flex: none; }
.sheet-tab { padding: 2px 16px 0; background: #e5e6ed; color: #3d4456; }
.nav + .sheet-tab { padding-left: 18px; }
.here { border-bottom: 2px solid #bcd5f2; background: #fff; color: #1fbb7d; font-weight: bold; }
.orange { background: #f5ae84; }
.add-sheet { padding-left: 5px; }
.hscroll { display: flex; align-items: center; gap: 7px; width: 682px; margin-left: auto; padding-right: 14px; }
.grip { width: 3px; height: 12px; border: 1px solid #9fa7b8; border-width: 0 1px; }
.htrack { display: flex; align-items: center; gap: 10px; flex: 1; height: 18px; padding-left: 6px; background: #e7e8ee; }
.hthumb { width: 235px; height: 16px; border-radius: 7px; background: #d3d6df; }

/* status bar */
.status { display: flex; align-items: center; height: 27px; flex: none; padding: 0 7px 0 15px; background: #f6f7f9; }
.status > .rule { margin: 0 9px 0 14px; }
.payroll { gap: 3px; }
.up { margin-left: 5px; rotate: 180deg; }
.status-right { display: flex; align-items: center; gap: 14px; margin-left: auto; }
.status-right > svg + .focus { margin-left: -8px; }
.focus { gap: 5px; }
.focus + .rule { margin-right: -6px; }
.views { display: flex; gap: 5px; }
.views button { justify-content: center; height: 24px; width: 20px; }
.views .view-on { width: 23px; border-radius: 2px; background: #dcdfe6; }
.status-right .rule + .percent { margin: 0 -3px 0 -4px; }
.status-right .views + .rule { margin-left: -2px; }
.zoom { appearance: none; width: 138px; height: 14px; margin: 0 -2px; background: linear-gradient(90deg, #3a4664 50%, #d5d8df 50%) center / 100% 1px no-repeat; }
.zoom::-webkit-slider-thumb { appearance: none; width: 13px; height: 13px; border: 1px solid #444; border-radius: 50%; background: #ececec; }

/* menus over the sheet */
.menu { position: absolute; left: 7px; top: 133px; width: 140px; padding: 2px 1px 0; border: 1px solid #c9ccd4; background: #fff; box-shadow: 1px 1px 3px #0003; }
.menu button { display: flex; align-items: center; gap: 9px; width: 100%; height: 28px; padding: 0 8px; }
.menu svg { fill: none; stroke: #2d3650; }
.menu i { margin-left: auto; border: 3px solid transparent; border-left-color: #6b7488; border-right: 0; }
.menu .hot, .submenu .hot { background: #e7e9ee; }
.submenu { position: absolute; left: 145px; top: 191px; width: 149px; padding: 1px 0; border: 1px solid #c9ccd4; background: #fff; box-shadow: 1px 1px 3px #0003; }
.submenu button { display: flex; align-items: center; gap: 5px; width: 100%; height: 44px; padding-left: 4px; }
.submenu .short { height: 27px; padding-left: 49px; }
.boxed { background: #e0e3e8; }

.pointers { position: absolute; left: 0; top: 0; pointer-events: none; }
.arrows { filter: drop-shadow(3px 3px 2px #0007); fill: none; stroke: #f00; stroke-width: 3; stroke-linecap: round; }
.arrows path { marker-end: url(#head); }
#head path { fill: #f00; }

.watermark { position: absolute; right: 11px; bottom: 9px; display: flex; pointer-events: none; opacity: .85; }
.watermark svg { margin-top: 3px; }
.watermark p { display: flex; flex-direction: column; margin: 0; }
.wm-name { color: #4f94d8; font: bold 21px/26px "Noto Sans CJK SC", sans-serif; }
.wm-url { color: #52b878; font: bold 16px/18px "Liberation Sans", sans-serif; }
```
